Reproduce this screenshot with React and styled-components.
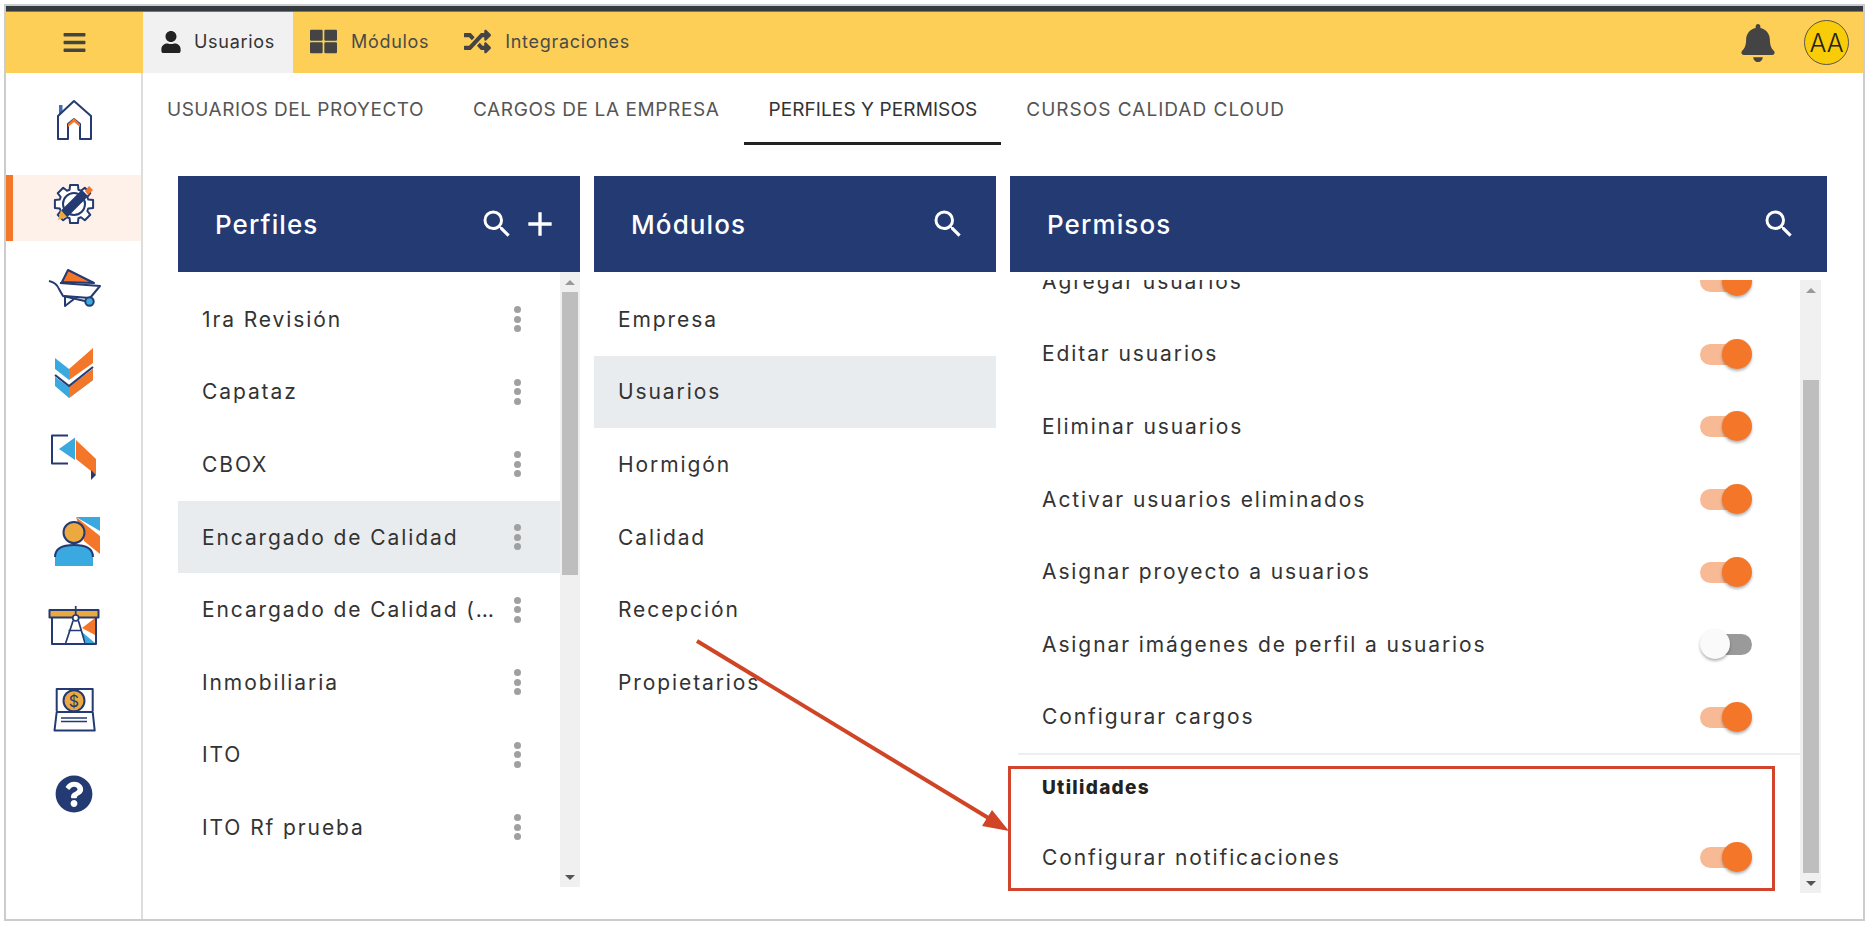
import React from 'react';
import styled, { createGlobalStyle } from 'styled-components';
import { FaBars, FaBell, FaQuestionCircle, FaRandom, FaThLarge, FaUser } from 'react-icons/fa';
import { MdAdd, MdSearch } from 'react-icons/md';

const navy = '#243a72';
const orange = '#f47629';
const amber = '#eca940';
const sky = '#3aa9e0';
const ROW = 72.6;

const Global = createGlobalStyle`
  html, body { margin: 0; padding: 0; background: #fff; }
  body { font-family: Inter, "Noto Sans", "Liberation Sans", sans-serif; color: #333; }
  * { box-sizing: border-box; }
`;

const Page = styled.div`
  position: relative;
  width: 1867px;
  height: 927px;
  padding: 4px 2px 6px 4px;
  overflow: hidden;
`;

const Frame = styled.div`
  height: 100%;
  border: 2px solid #ccc;
  display: flex;
  flex-direction: column;
`;

const DarkBar = styled.div`
  height: 6px;
  background: #343a40;
  border-bottom: 1px solid #777;
`;

const TopBar = styled.header`
  height: 61px;
  display: flex;
  align-items: stretch;
  background: #fdcf57;
`;

const MenuCell = styled.div`
  width: 137px;
  display: flex;
  align-items: center;
  justify-content: center;
  color: #444;
  font-size: 25px;
`;

const ModuleTab = styled.div`
  display: flex;
  align-items: center;
  gap: ${p => p.$gap}px;
  padding: 0 18px 2px 17px;
  font-size: 18px;
  letter-spacing: 0.7px;
  color: ${p => (p.$active ? '#333' : '#4a4a4a')};
  background: ${p => (p.$active ? '#f1f1f1' : 'transparent')};
  svg { color: ${p => (p.$active ? '#222' : '#444')}; }
`;

const TopRight = styled.div`
  margin-left: auto;
  display: flex;
  align-items: center;
  gap: 27px;
  padding-right: 14px;
  color: #444;
`;

const Avatar = styled.div`
  width: 45px;
  height: 45px;
  border-radius: 50%;
  background: #f9cc0a;
  border: 1px solid #555;
  display: flex;
  align-items: center;
  justify-content: center;
  font-size: 25px;
  font-weight: 300;
  color: #222;
`;

const Body = styled.div`
  flex: 1;
  display: flex;
  min-height: 0;
`;

const Sidebar = styled.nav`
  width: 137px;
  border-right: 2px solid #ddd;
  padding-top: 18px;
  display: flex;
  flex-direction: column;
  gap: 18.2px;
`;

const NavItem = styled.div`
  height: 66px;
  padding-top: 4px;
  display: flex;
  justify-content: center;
  background: ${p => (p.$active ? '#fef1ea' : 'transparent')};
  box-shadow: ${p => (p.$active ? `inset 7px 0 0 ${orange}` : 'none')};
`;

const Main = styled.main`
  flex: 1;
  min-width: 0;
  display: flex;
  flex-direction: column;
`;

const SubTabs = styled.div`
  height: 72px;
  display: flex;
`;

const SubTab = styled.div`
  padding: 3px 24px 0;
  margin-right: 1px;
  display: flex;
  align-items: center;
  height: 72px;
  font-size: 19px;
  letter-spacing: ${p => p.$spacing || 0.5}px;
  color: ${p => (p.$active ? '#333' : '#555')};
  border-bottom: 3px solid ${p => (p.$active ? '#222' : 'transparent')};
`;

const Panels = styled.div`
  display: flex;
  gap: 14px;
  padding: 31px 0 0 35px;
`;

const Panel = styled.section`
  width: ${p => p.$width}px;
  display: flex;
  flex-direction: column;
`;

const PanelHeader = styled.div`
  height: 96px;
  display: flex;
  align-items: center;
  padding: 0 30px 0 37px;
  background: ${navy};
  color: #fff;
  font-size: 26px;
  font-weight: 500;
  letter-spacing: 1.1px;
  h2 { font: inherit; margin: 0 auto 0 0; }
`;

const AddIcon = styled(MdAdd)`
  margin: 0 -10px 0 5px;
`;

const PanelBody = styled.div`
  height: ${p => p.$height}px;
  margin-top: ${p => p.$top || 0}px;
  margin-left: ${p => p.$left || 0}px;
  padding-right: ${p => p.$right || 0}px;
  display: flex;
`;

const List = styled.div`
  flex: 1;
  min-width: 0;
  padding-top: ${p => p.$top || 0}px;
  overflow: hidden;
`;

const Row = styled.div`
  height: ${ROW}px;
  display: flex;
  align-items: center;
  justify-content: space-between;
  padding: 0 ${p => p.$right || 24}px 0 24px;
  font-size: 21px;
  letter-spacing: 1.9px;
  color: #333;
  white-space: nowrap;
  background: ${p => (p.$active ? '#e9ecef' : 'transparent')};
`;

const Dots = styled.span`
  width: 7px;
  margin-right: 38px;
  display: flex;
  flex-direction: column;
  gap: 2.5px;
  i { width: 7px; height: 7px; border-radius: 50%; background: #a0a0a0; }
`;

const ScrollTrack = styled.div`
  width: ${p => p.$width}px;
  background: #f0f0f0;
  display: flex;
  flex-direction: column;
  align-items: center;
  padding: 8px 0 7px;
`;

const ArrowUp = styled.span`
  width: 0;
  height: 0;
  border: 5px solid transparent;
  border-top: 0;
  border-bottom: 5px solid #999;
`;

const ArrowDown = styled.span`
  width: 0;
  height: 0;
  margin-top: auto;
  border: 5px solid transparent;
  border-bottom: 0;
  border-top: 5px solid #555;
`;

const Thumb = styled.div`
  width: 16px;
  height: ${p => p.$height}px;
  margin-top: ${p => p.$top}px;
  background: #bebebe;
`;

const PermList = styled.div`
  margin-top: -35px;
  margin-left: 12px;
`;

const Section = styled.div`
  position: relative;
  border-bottom: 2px solid #eee;
`;

const SectionTitle = styled.div`
  height: 66px;
  padding: 0 24px 2px;
  display: flex;
  align-items: center;
  font-size: 19px;
  font-weight: 800;
  letter-spacing: 1.3px;
  color: #222;
`;

const Callout = styled.div`
  position: absolute;
  left: -10px;
  right: 25px;
  top: 11px;
  bottom: 3px;
  border: 3.5px solid #d0452b;
  pointer-events: none;
`;

const Switch = styled.span`
  position: relative;
  width: 52px;
  height: 30px;
  flex: none;
`;

const SwitchTrack = styled.span`
  position: absolute;
  top: 5px;
  height: 21px;
  left: ${p => (p.$on ? 0 : 4)}px;
  right: ${p => (p.$on ? 9 : 0)}px;
  border-radius: 11px;
  background: ${p => (p.$on ? '#f8b995' : '#9a9a9a')};
`;

const SwitchThumb = styled.span`
  position: absolute;
  top: 0;
  width: 30px;
  height: 30px;
  border-radius: 50%;
  left: ${p => (p.$on ? 22 : 0)}px;
  background: ${p => (p.$on ? orange : '#fafafa')};
  box-shadow: 0 2px 3px rgba(0, 0, 0, 0.3);
`;

const ArrowOverlay = styled.svg`
  position: absolute;
  left: 0;
  top: 0;
  pointer-events: none;
`;

const Toggle = ({ on = true }) => (
  <Switch>
    <SwitchTrack $on={on} />
    <SwitchThumb $on={on} />
  </Switch>
);

const NavSvg = ({ children }) => (
  <svg width="60" height="50" viewBox="0 0 60 50" fill="none" stroke={navy} strokeWidth="2" strokeLinejoin="round">
    {children}
  </svg>
);

const gearPath = (() => {
  const pts = [];
  for (let i = 0; i < 8; i++) {
    const a = (i * Math.PI) / 4;
    [[-0.3, 15], [-0.2, 19.5], [0.2, 19.5], [0.3, 15]].forEach(([d, r]) => {
      pts.push(`${(30 + r * Math.cos(a + d)).toFixed(1)} ${(25 + r * Math.sin(a + d)).toFixed(1)}`);
    });
  }
  return `M${pts.join('L')}Z`;
})();

const HomeIcon = () => (
  <NavSvg>
    <rect x="15" y="10" width="3.5" height="10" fill="#3f6fb0" stroke="none" />
    <path d="M14 44V21L30 6L47 21V44H36V29L30 24L24 29V44Z" fill="#fff" />
    <path d="M24 29L30 23L36 29V32L30 27L24 32Z" fill={orange} stroke="none" />
  </NavSvg>
);

const GearIcon = () => (
  <NavSvg>
    <path d={gearPath} fill="#fff" strokeWidth="2" />
    <circle cx="30" cy="25" r="11" fill="#fff" strokeWidth="2" />
    <path d="M19 36L41 14" stroke={navy} strokeWidth="9" />
    <path d="M41 12L45 7L49 11L44 16Z" fill={orange} stroke="none" />
    <path d="M14 41L17 31L23 38Z" fill={amber} stroke="none" />
  </NavSvg>
);

const BarrowIcon = () => (
  <NavSvg>
    <path d="M24 7L50 20L18 19Z" fill={orange} strokeWidth="2" />
    <path d="M5 18C10 19 13 21 15 26L19 33L45 39" strokeWidth="2" />
    <path d="M16 20L56 23L46 35L20 33" strokeWidth="2" />
    <path d="M21 33L21 43L30 36" strokeWidth="2" />
    <circle cx="45.5" cy="38.5" r="4.2" fill={sky} strokeWidth="2" />
  </NavSvg>
);

const CheckIcon = () => (
  <NavSvg>
    <path d="M11 10L25 21V32L11 21Z" fill={sky} stroke="none" />
    <path d="M25 21L49 0V15L25 32Z" fill={orange} stroke="none" />
    <path d="M11 29L25 39L49 21V32L25 50L11 38Z" fill={sky} stroke="none" />
    <path d="M25 39L49 21V32L25 50Z" fill={orange} stroke="none" />
    <path d="M11 27L25 38L49 19" strokeWidth="2.2" />
  </NavSvg>
);

const ReportIcon = () => (
  <NavSvg>
    <path d="M24 3.5H8V31.5H24" strokeWidth="2" />
    <path d="M31 5.5L15 17L31 28Z" fill={sky} stroke="none" />
    <path d="M32 8L52 27V43L32 27Z" fill={orange} stroke="none" />
    <path d="M47 38L52 43L47 48Z" fill={navy} stroke="none" />
  </NavSvg>
);

const PersonIcon = () => (
  <NavSvg>
    <path d="M32 1H56V15Z" fill={sky} stroke="none" />
    <path d="M32 1L56 20V38L40 25Z" fill={orange} stroke="none" />
    <path d="M11 50V41Q11 29 30 29Q49 29 49 41V50Z" fill={sky} stroke="none" />
    <path d="M11 41Q11 29 30 29Q49 29 49 41" strokeWidth="2" />
    <circle cx="30" cy="16.5" r="10.5" fill={amber} strokeWidth="2" />
  </NavSvg>
);

const DraftIcon = () => (
  <NavSvg>
    <rect x="8" y="17" width="44" height="27" fill="#fff" />
    <path d="M38 28L51 18V35Z" fill={orange} stroke="none" />
    <path d="M38 32L51 43H42Z" fill={sky} stroke="none" />
    <rect x="5.5" y="10" width="49" height="7.5" fill={amber} />
    <path d="M31.7 6V15M29 21L21.7 43M34.5 21L41 43M24.5 30.5H38" strokeWidth="1.7" />
    <circle cx="31.7" cy="18" r="3" fill="#fff" strokeWidth="1.7" />
  </NavSvg>
);

const BudgetIcon = () => (
  <NavSvg>
    <path d="M12.7 27V5H48.7V27" fill="#fff" strokeWidth="2" />
    <path d="M12.7 28H48.7L50.7 46.5H10.5Z" fill="#fff" strokeWidth="2" />
    <circle cx="30" cy="16.7" r="10.5" fill={amber} strokeWidth="2" />
    <text x="30" y="22.5" textAnchor="middle" fontSize="16" fill={navy} stroke="none" fontFamily="Inter, sans-serif">$</text>
    <path d="M17 34H43M17 37.5H43" strokeWidth="1.6" />
  </NavSvg>
);

const navIcons = [HomeIcon, GearIcon, BarrowIcon, CheckIcon, ReportIcon, PersonIcon, DraftIcon, BudgetIcon];
const perfiles = ['1ra Revisión', 'Capataz', 'CBOX', 'Encargado de Calidad', 'Encargado de Calidad (…', 'Inmobiliaria', 'ITO', 'ITO Rf prueba'];
const modulos = ['Empresa', 'Usuarios', 'Hormigón', 'Calidad', 'Recepción', 'Propietarios'];
const permisos = [
  ['Agregar usuarios', true],
  ['Editar usuarios', true],
  ['Eliminar usuarios', true],
  ['Activar usuarios eliminados', true],
  ['Asignar proyecto a usuarios', true],
  ['Asignar imágenes de perfil a usuarios', false],
  ['Configurar cargos', true],
];

export default function App() {
  return (
    <>
      <Global />
      <Page>
        <Frame>
          <DarkBar />
          <TopBar>
            <MenuCell><FaBars /></MenuCell>
            <ModuleTab $active $gap={12}><FaUser size={22} />Usuarios</ModuleTab>
            <ModuleTab $gap={14}><FaThLarge size={27} />Módulos</ModuleTab>
            <ModuleTab $gap={14}><FaRandom size={27} />Integraciones</ModuleTab>
            <TopRight>
              <FaBell size={38} />
              <Avatar>AA</Avatar>
            </TopRight>
          </TopBar>
          <Body>
            <Sidebar>
              {navIcons.map((Icon, i) => (
                <NavItem key={i} $active={i === 1}><Icon /></NavItem>
              ))}
              <NavItem><FaQuestionCircle size={38} color={navy} style={{ marginTop: 6 }} /></NavItem>
            </Sidebar>
            <Main>
              <SubTabs>
                <SubTab>USUARIOS DEL PROYECTO</SubTab>
                <SubTab $spacing={0.6}>CARGOS DE LA EMPRESA</SubTab>
                <SubTab $active $spacing={0.1}>PERFILES Y PERMISOS</SubTab>
                <SubTab $spacing={1}>CURSOS CALIDAD CLOUD</SubTab>
              </SubTabs>
              <Panels>
                <Panel $width={402}>
                  <PanelHeader>
                    <h2>Perfiles</h2>
                    <MdSearch size={36} />
                    <AddIcon size={40} />
                  </PanelHeader>
                  <PanelBody $height={615}>
                    <List $top={11}>
                      {perfiles.map((p, i) => (
                        <Row key={p} $active={i === 3} $right={1}>
                          {p}
                          <Dots><i /><i /><i /></Dots>
                        </Row>
                      ))}
                    </List>
                    <ScrollTrack $width={20}>
                      <ArrowUp />
                      <Thumb $height={283} $top={7} />
                      <ArrowDown />
                    </ScrollTrack>
                  </PanelBody>
                </Panel>
                <Panel $width={402}>
                  <PanelHeader>
                    <h2>Módulos</h2>
                    <MdSearch size={36} />
                  </PanelHeader>
                  <PanelBody $height={615}>
                    <List $top={11}>
                      {modulos.map((m, i) => (
                        <Row key={m} $active={i === 1}>{m}</Row>
                      ))}
                    </List>
                  </PanelBody>
                </Panel>
                <Panel $width={817}>
                  <PanelHeader>
                    <h2>Permisos</h2>
                    <MdSearch size={36} />
                  </PanelHeader>
                  <PanelBody $height={613} $top={8} $left={-4} $right={6}>
                    <List>
                      <PermList>
                        <Section>
                          {permisos.map(([label, on]) => (
                            <Row key={label} $right={48}>
                              {label}
                              <Toggle on={on} />
                            </Row>
                          ))}
                        </Section>
                        <Section>
                          <SectionTitle>Utilidades</SectionTitle>
                          <Row $right={48}>
                            Configurar notificaciones
                            <Toggle />
                          </Row>
                          <Callout />
                        </Section>
                      </PermList>
                    </List>
                    <ScrollTrack $width={21}>
                      <ArrowUp />
                      <Thumb $height={493} $top={87} />
                      <ArrowDown />
                    </ScrollTrack>
                  </PanelBody>
                </Panel>
              </Panels>
            </Main>
          </Body>
        </Frame>
        <ArrowOverlay width="1867" height="927" viewBox="0 0 1867 927">
          <path d="M697 641L1000 825" stroke="#cf4526" strokeWidth="4" />
          <path d="M1009 831L982 826L992 810Z" fill="#cf4526" />
        </ArrowOverlay>
      </Page>
    </>
  );
}
